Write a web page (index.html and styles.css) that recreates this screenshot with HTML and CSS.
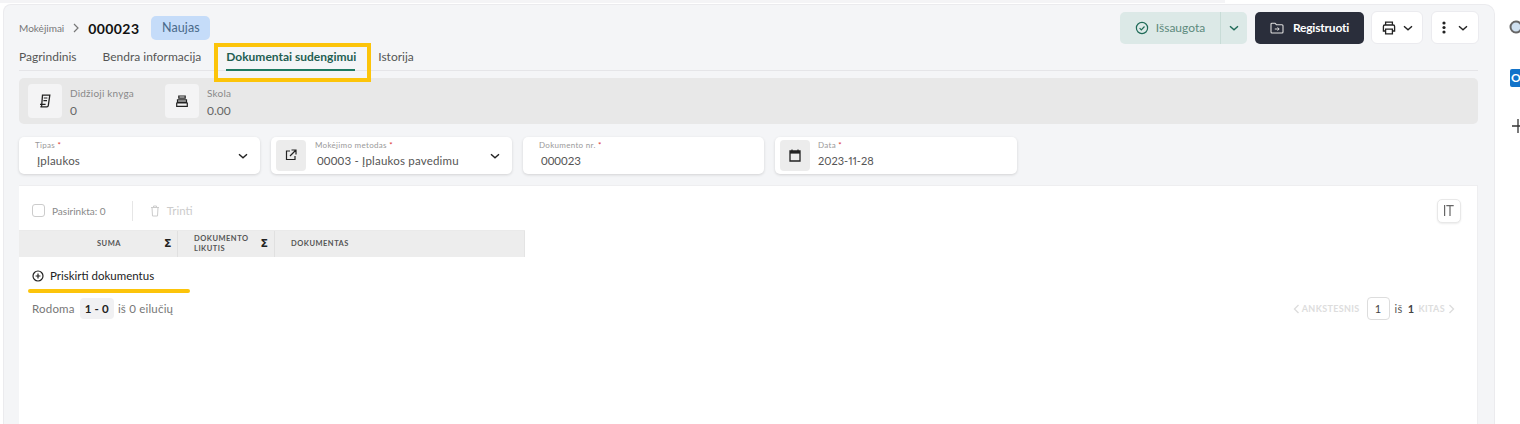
FILE: index.html
```html
<!DOCTYPE html>
<html lang="lt">
<head>
<meta charset="utf-8">
<title>Mokėjimai 000023</title>
<link rel="stylesheet" href="styles.css">
</head>
<body>
<div class="app">
  <div class="topstrip"></div>
  <main class="panel">
    <header class="head">
      <div class="crumbs">
        <span class="crumb">Mokėjimai</span>
        <svg class="crumb-sep" width="8" height="10" viewBox="0 0 8 10"><path d="M2 1l4 4-4 4" fill="none" stroke="#777" stroke-width="1.2"/></svg>
        <span class="doc-no">000023</span>
        <span class="badge">Naujas</span>
      </div>
      <div class="actions">
        <div class="saved">
          <span class="saved-main">
            <svg width="14" height="14" viewBox="0 0 14 14"><circle cx="7" cy="7" r="5.6" fill="none" stroke="#1f6b58" stroke-width="1.2"/><path d="M4.6 7.2l1.7 1.7 3.2-3.4" fill="none" stroke="#1f6b58" stroke-width="1.2"/></svg>
            Išsaugota
          </span>
          <span class="saved-caret">
            <svg width="10" height="6" viewBox="0 0 10 6"><path d="M1 1.200l4 3.600 4-3.600" fill="none" stroke="#1f6b58" stroke-width="1.4"/></svg>
          </span>
        </div>
        <button class="register">
          <svg width="14" height="12" viewBox="0 0 14 12"><path d="M1 2.2c0-.6.4-1 1-1h3l1.4 1.5H12c.6 0 1 .4 1 1V10c0 .6-.4 1-1 1H2c-.6 0-1-.4-1-1z" fill="none" stroke="#ddd" stroke-width="1.1"/><path d="M4.8 7h4.2M7.6 5.4L9.2 7 7.6 8.6" fill="none" stroke="#ddd" stroke-width="1"/></svg>
          Registruoti
        </button>
        <button class="tool tool-print">
          <svg width="14" height="14" viewBox="0 0 14 14"><path d="M3.6 4V1.2h6.8V4M3.6 10H1.4V5.4c0-.8.6-1.4 1.4-1.4h8.4c.8 0 1.4.6 1.4 1.4V10h-2.200" fill="none" stroke="#222" stroke-width="1.300"/><path d="M3.600 8.200h6.800v4.600H3.600z" fill="none" stroke="#222" stroke-width="1.300"/></svg>
          <svg width="10" height="6" viewBox="0 0 10 6"><path d="M1 1.200l4 3.600 4-3.600" fill="none" stroke="#222" stroke-width="1.400"/></svg>
        </button>
        <button class="tool tool-more">
          <svg width="4" height="13" viewBox="0 0 4 13"><circle cx="2" cy="2" r="1.600" fill="#222"/><circle cx="2" cy="6.500" r="1.600" fill="#222"/><circle cx="2" cy="11" r="1.600" fill="#222"/></svg>
          <svg width="10" height="6" viewBox="0 0 10 6"><path d="M1 1.200l4 3.600 4-3.600" fill="none" stroke="#222" stroke-width="1.400"/></svg>
        </button>
      </div>
    </header>

    <nav class="tabs">
      <span class="tab">Pagrindinis</span>
      <span class="tab tab-info">Bendra informacija</span>
      <span class="tab tab-active">Dokumentai sudengimui</span>
      <span class="tab">Istorija</span>
    </nav>

    <section class="stats">
      <div class="stat stat-first">
        <span class="icon-box">
          <svg width="12" height="14" viewBox="0 0 12 14"><path d="M3.500 1.200h7.300L9.300 11.500c-.1.800-.7 1.300-1.400 1.300H1.400c.8 0 1.200-.5 1.300-1.300z" fill="none" stroke="#222" stroke-width="1.300"/><path d="M4.800 4h3.600M4.400 6.600h3.600M1 10.300h5.600" fill="none" stroke="#222" stroke-width="1.200"/></svg>
        </span>
        <div class="stat-text"><span class="stat-label">Didžioji knyga</span><span class="stat-value">0</span></div>
      </div>
      <div class="stat">
        <span class="icon-box">
          <svg width="12" height="12" viewBox="0 0 12 12"><path d="M2.800 1h6.400v2.200H2.800zM1.500 4.800h9v2.200h-9zM.7 8h10.600v3.300H.7z" fill="none" stroke="#222" stroke-width="1.200"/></svg>
        </span>
        <div class="stat-text"><span class="stat-label">Skola</span><span class="stat-value">0.00</span></div>
      </div>
    </section>

    <section class="fields">
      <div class="field f-type">
        <div class="field-body pad-type"><span class="field-label">Tipas <i>*</i></span><span class="field-value value-type">Įplaukos</span></div>
        <svg class="caret" width="10" height="6" viewBox="0 0 10 6"><path d="M1 1.200l4 3.600 4-3.600" fill="none" stroke="#222" stroke-width="1.400"/></svg>
      </div>
      <div class="field f-method">
        <span class="field-icon"><svg width="12" height="12" viewBox="0 0 12 12"><path d="M5 2H1.500v8.500H10V7M6.500 1h4.500v4.500M11 1L5 7" fill="none" stroke="#222" stroke-width="1.200"/></svg></span>
        <div class="field-body"><span class="field-label">Mokėjimo metodas <i>*</i></span><span class="field-value value-method">00003 - Įplaukos pavedimu</span></div>
        <svg class="caret" width="10" height="6" viewBox="0 0 10 6"><path d="M1 1.200l4 3.600 4-3.600" fill="none" stroke="#222" stroke-width="1.400"/></svg>
      </div>
      <div class="field f-doc">
        <div class="field-body pad-doc"><span class="field-label">Dokumento nr. <i>*</i></span><span class="field-value value-doc">000023</span></div>
      </div>
      <div class="field f-date">
        <span class="field-icon"><svg width="12" height="13" viewBox="0 0 12 13"><path d="M1 2h10v10H1z" fill="none" stroke="#222" stroke-width="1.300"/><path d="M1 2h10v2.600H1z" fill="#222"/><path d="M3 .5v2M9 .5v2" stroke="#222" stroke-width="1.200"/></svg></span>
        <div class="field-body body-date"><span class="field-label">Data <i>*</i></span><span class="field-value value-date">2023-11-28</span></div>
      </div>
    </section>

    <section class="card">
      <div class="toolbar">
        <span class="checkbox"></span>
        <span class="selected">Pasirinkta: 0</span>
        <span class="divider"></span>
        <svg width="10" height="12" viewBox="0 0 10 12"><path d="M1 2.500h8M3.500 2.500V1h3v1.500M2 2.500l.5 8.500h5l.5-8.500" fill="none" stroke="#ccc" stroke-width="1"/></svg>
        <span class="delete">Trinti</span>
        <button class="columns"><svg width="10" height="11" viewBox="0 0 10 11"><path d="M.6 0v11M2.300.6h7.400M6 .6V11" fill="none" stroke="#666" stroke-width="1.200"/></svg></button>
      </div>
      <div class="table-head">
        <div class="th th-sum"><span class="th-name">SUMA</span><span class="sigma">Σ</span></div>
        <div class="th th-rest"><span class="th-name">DOKUMENTO<br>LIKUTIS</span><span class="sigma">Σ</span></div>
        <div class="th th-doc"><span class="th-name">DOKUMENTAS</span></div>
      </div>
      <div class="assign">
        <svg width="12" height="12" viewBox="0 0 12 12"><circle cx="6" cy="6" r="5" fill="none" stroke="#222" stroke-width="1.200"/><path d="M3.600 6h4.800M6 3.600v4.800" stroke="#222" stroke-width="1.200"/></svg>
        <span>Priskirti dokumentus</span>
      </div>
      <div class="assign-line"></div>
      <div class="pager">
        <div class="pager-left">
          <span>Rodoma</span><span class="range">1 - 0</span><span>iš 0 eilučių</span>
        </div>
        <div class="pager-right">
          <svg width="7" height="10" viewBox="0 0 7 10"><path d="M5.500 1l-4 4 4 4" fill="none" stroke="#ddd" stroke-width="1.400"/></svg>
          <span class="pg-link pg-prev">ANKSTESNIS</span>
          <span class="pg-input">1</span>
          <span class="pg-of">iš</span><span class="pg-total">1</span>
          <span class="pg-link pg-next">KITAS</span>
          <svg width="7" height="10" viewBox="0 0 7 10"><path d="M1.500 1l4 4-4 4" fill="none" stroke="#ddd" stroke-width="1.400"/></svg>
        </div>
      </div>
    </section>
    <div class="highlight-tab"></div>
  </main>
  <aside class="rail">
    <svg class="rail-search" width="12" height="18" viewBox="0 0 12 18"><circle cx="8" cy="8" r="5.500" fill="#cfe0f0" stroke="#666" stroke-width="2"/></svg>
    <span class="rail-outlook">O</span>
    <svg class="rail-plus" width="8" height="14" viewBox="0 0 8 14"><path d="M0 7h8M6 0v14" stroke="#333" stroke-width="1.300"/></svg>
  </aside>
</div>
</body>
</html>
```
FILE: styles.css
```css
* { box-sizing: border-box; }
html, body { margin: 0; padding: 0; }
body {
  width: 1520px; height: 424px; overflow: hidden;
  background: #fff;
  font-family: "Lato", "Liberation Sans", sans-serif;
  color: #333;
}
button { font-family: inherit; cursor: pointer; }
.app { display: flex; height: 424px; padding-top: 4px; position: relative; }
.topstrip { position: absolute; left: 0; right: 295px; top: 0; height: 3px; background: #f4f4f6; }
.panel {
  position: relative;
  margin-left: 3px; width: 1492px; height: 420px;
  background: #f4f5f7;
  border: 1px solid #ebebee; border-bottom: 0;
  border-radius: 8px 10px 0 0;
  padding: 6px 15px 0 15px;
  display: flex; flex-direction: column;
}
.head { display: flex; justify-content: space-between; align-items: flex-start; height: 33px; }
.crumbs { display: flex; align-items: center; height: 24px; margin-top: 5px; }
.crumb { font-size: 10px; color: #777; }
.crumb-sep { margin: 0 8px; }
.doc-no { font-size: 14px; font-weight: 700; color: #111; letter-spacing: .4px; }
.badge { margin-left: 12px; width: 59px; height: 24px; border-radius: 5px; background: #c5dcf9; color: #4a6a8a; font-size: 12.500px; letter-spacing: .1px; text-align: center; line-height: 24px; }
.actions { display: flex; align-items: center; }
.saved { display: flex; width: 127px; height: 32px; border-radius: 5px; background: #dce9e7; color: #5d8a7d; font-size: 12px; }
.saved-main { width: 101px; display: flex; align-items: center; justify-content: center; gap: 7px; border-right: 1px solid #c8dcd7; }
.saved-caret { flex: 1; display: flex; align-items: center; justify-content: center; }
.register { margin-left: 8px; width: 109px; height: 32px; border: 0; border-radius: 5px; background: #2a2e3b; color: #fff; font-size: 12px; font-weight: 700; letter-spacing: -.2px; display: flex; align-items: center; justify-content: center; gap: 9px; }
.tool { height: 33px; margin-left: 7px; background: #fff; border: 1px solid #ebebef; border-radius: 6px; display: flex; align-items: center; justify-content: center; }
.tool-print { width: 52px; gap: 7px; }
.tool-more { width: 48px; margin-left: 8px; gap: 12px; }
.tabs { display: flex; height: 27px; border-bottom: 1px solid #e5e5e8; font-size: 12px; color: #555; margin-right: 1px; }
.tab { height: 26px; padding-top: 5px; margin-right: 26px; white-space: nowrap; }
.tab-info { margin-right: 25px; }
.tab-active { margin-right: 23px; color: #1f5f52; font-weight: 700; border-bottom: 2px solid #1f7a62; height: 27px; width: 129px; }
.highlight-tab { position: absolute; left: 210px; top: 38px; width: 157px; height: 39px; border: 4px solid #fcc40a; pointer-events: none; }
.stats { margin: 7px 1px 0 0; height: 46px; border-radius: 5px; background: #e8e8e8; display: flex; align-items: center; padding-left: 9px; }
.stat { display: flex; align-items: center; gap: 8px; }
.stat-first { width: 137px; }
.icon-box { width: 34px; height: 34px; border-radius: 4px; background: #f4f4f5; display: flex; align-items: center; justify-content: center; }
.stat-text { display: flex; flex-direction: column; margin-top: 5px; }
.stat-label { font-size: 10px; color: #888; line-height: 14px; letter-spacing: .2px; }
.stat-value { font-size: 12px; color: #666; line-height: 21px; }
.fields { display: flex; margin-top: 13px; gap: 11px; }
.field { height: 37px; border-radius: 5px; background: #fff; box-shadow: 0 1px 3px rgba(0,0,0,.14); display: flex; align-items: center; position: relative; }
.f-type { width: 241px; }
.f-method { width: 241px; padding-left: 5px; }
.f-doc { width: 241px; }
.f-date { width: 242px; padding-left: 5px; }
.field-icon { width: 30px; height: 31px; border-radius: 4px; background: #ececec; display: flex; align-items: center; justify-content: center; flex: none; }
.field-body { display: flex; flex-direction: column; padding-left: 9px; }
.body-date { padding-left: 8px; }
.pad-type, .pad-doc { padding-left: 16px; }
.field-label { font-size: 8px; line-height: 10px; color: #999; letter-spacing: .3px; margin-top: -1px; }
.field-label i { color: #d33; font-style: normal; }
.field-value { font-size: 11.500px; line-height: 17px; color: #555; margin-top: 2px; }
.value-type { padding-left: 2px; letter-spacing: .2px; }
.value-method { padding-left: 2px; letter-spacing: .2px; }
.value-doc { padding-left: 2px; }
.value-date { font-size: 11px; font-variant-numeric: proportional-nums; }
.caret { position: absolute; right: 12px; top: 16px; }
.card { margin: 11px 1px 0 0; height: 240px; background: #fff; border-top: 1px solid #eeeef0; border-right: 1px solid #eeeef0; }
.toolbar { height: 44px; display: flex; align-items: center; padding: 6px 16px 0 13px; font-size: 10px; }
.checkbox { width: 13px; height: 13px; border: 1px solid #ccc; border-radius: 3px; margin-right: 7px; }
.selected { color: #888; }
.divider { width: 1px; height: 20px; background: #e6e6e6; margin: 0 17px 0 26px; }
.delete { margin-left: 7px; font-size: 11.500px; color: #ccc; }
.columns { margin-left: auto; width: 24px; height: 24px; background: #fff; border: 1px solid #e8e8e8; border-radius: 5px; box-shadow: 0 1px 2px rgba(0,0,0,.08); padding: 0; display: flex; align-items: center; justify-content: center; }
.table-head { display: flex; width: 506px; height: 27px; background: #ededed; border-top: 1px solid #eaeaea; font-size: 7.500px; font-weight: 700; color: #555; letter-spacing: .5px; }
.th { display: flex; align-items: center; border-right: 1px solid #e0e0e0; }
.th-sum { width: 159px; padding-left: 78px; }
.th-rest { width: 97px; padding-left: 16px; line-height: 9.500px; }
.th-doc { flex: 1; padding-left: 16px; border-right: 1px solid #e4e4e4; }
.sigma { font-size: 11px; color: #222; font-family: "DejaVu Sans", sans-serif; }
.th-sum .sigma { margin-left: 43px; }
.th-rest .sigma { margin-left: 12px; }
.assign { display: flex; align-items: center; gap: 6px; margin: 11px 0 0 13px; font-size: 11.500px; color: #222; height: 16px; }
.assign-line { width: 162px; height: 4px; border-radius: 2px; background: #fcc40a; margin: 5px 0 0 9px; }
.pager { display: flex; justify-content: space-between; align-items: center; margin-top: 4px; padding: 0 22px 0 13px; height: 24px; }
.pager-left { display: flex; align-items: center; gap: 4px; font-size: 11.500px; color: #777; letter-spacing: .2px; }
.range { padding: 0 5px; height: 21px; line-height: 21px; border-radius: 4px; background: #f1f1f3; color: #222; font-weight: 700; margin-left: 1px; }
.pager-right { display: flex; align-items: center; font-size: 9px; font-weight: 700; color: #ddd; letter-spacing: .35px; }
.pg-prev { margin: 0 7px 0 2px; }
.pg-input { width: 23px; height: 23px; border: 1px solid #ddd; border-radius: 4px; color: #444; font-size: 11px; font-weight: 400; text-align: center; line-height: 21px; }
.pg-of { margin-left: 5px; color: #555; font-size: 11px; font-weight: 400; }
.pg-total { margin-left: 5px; color: #444; font-size: 11px; }
.pg-next { margin: 0 3px 0 4px; }
.rail { width: 25px; position: relative; }
.rail-search { position: absolute; right: 0; top: 15px; }
.rail-outlook { position: absolute; right: 0; top: 65px; width: 10px; height: 18px; background: #1273c9; color: #fff; font-size: 12px; font-weight: 700; line-height: 18px; overflow: hidden; border-radius: 2px 0 0 2px; padding-left: 1px; }
.rail-plus { position: absolute; right: 0; top: 115px; }
```
